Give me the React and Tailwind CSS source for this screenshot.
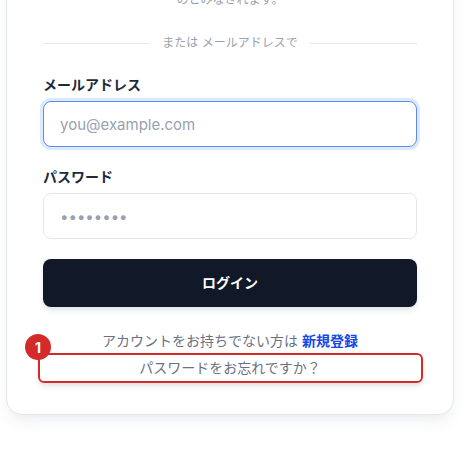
import React from "react";

const LoginCard = () => {
  return (
    <div className="ml-[6px] -mt-[57px] w-[448px] rounded-2xl border border-gray-200 bg-white px-9 pb-9 pt-8 shadow-lg shadow-gray-200/60">
      <p className="text-center text-xs leading-4 text-gray-400">
        ログインすることで、利用規約とプライバシーポリシーに同意した
        <br />
        のとみなされます。
      </p>

      {/* divider */}
      <div className="mt-[27px] flex items-center">
        <div className="h-px flex-1 bg-gray-200" />
        <span className="px-3 text-xs leading-4 text-gray-400">
          または メールアドレスで
        </span>
        <div className="h-px flex-1 bg-gray-200" />
      </div>

      <div className="mt-6 flex flex-col">
        <label className="mb-1.5 text-sm font-semibold leading-5 text-gray-800">
          メールアドレス
        </label>
        <input
          type="email"
          placeholder="you@example.com"
          className="h-[46px] w-full rounded-lg border border-[#5b8def] bg-white px-4 text-[15px] text-gray-800 outline-none ring-[3px] ring-blue-100 placeholder:text-gray-400"
        />
      </div>

      <div className="mt-5 flex flex-col">
        <label className="mb-1.5 text-sm font-semibold leading-5 text-gray-800">
          パスワード
        </label>
        <input
          type="password"
          placeholder="••••••••"
          className="h-[46px] w-full rounded-lg border border-gray-200 bg-white px-4 text-[15px] text-gray-800 outline-none placeholder:text-gray-400"
        />
      </div>

      <button className="mt-5 h-12 w-full rounded-lg bg-[#111827] text-sm font-bold text-white shadow-md shadow-gray-300/60">
        ログイン
      </button>

      <p className="mt-6 text-center text-sm leading-5 text-gray-500">
        アカウントをお持ちでない方は{" "}
        <a href="#" className="font-bold text-blue-700">
          新規登録
        </a>
      </p>

      <div className="relative mt-[7px]">
        <a href="#" className="block text-center text-sm leading-5 text-gray-500">
          パスワードをお忘れですか？
        </a>
        {/* annotation */}
        <div className="pointer-events-none absolute -bottom-[5px] -left-[5px] -right-[6px] -top-[5px] rounded-md border-2 border-[#d42a2a] shadow-md shadow-gray-300/60">
          <span className="absolute -left-[15px] -top-[21px] flex h-[26px] w-[26px] items-center justify-center rounded-full bg-[#d42a2a] text-[14px] font-bold text-white">
            1
          </span>
        </div>
      </div>
    </div>
  );
};

export default function App() {
  return (
    <div className="h-[453px] w-[470px] overflow-hidden bg-white font-[Inter,'Noto_Sans_CJK_JP',sans-serif]">
      <LoginCard />
    </div>
  );
}
